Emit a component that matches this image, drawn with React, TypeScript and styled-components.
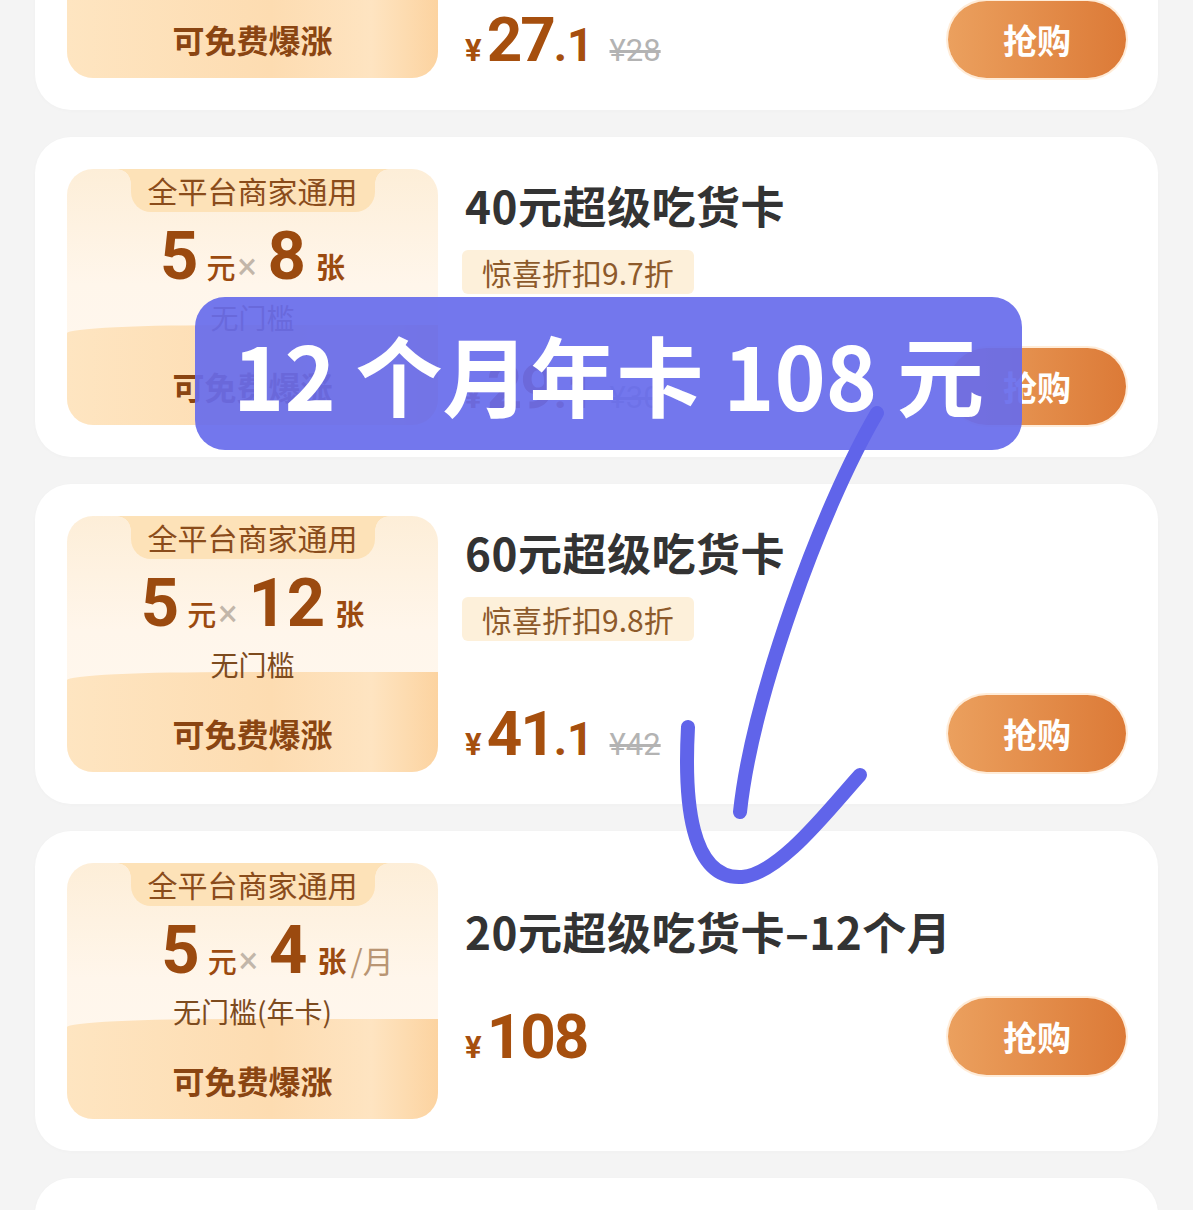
import styled, { createGlobalStyle } from "styled-components";

const GlobalStyle = createGlobalStyle`
  html, body {
    margin: 0;
    padding: 0;
    background: #f4f4f4;
  }
  body {
    font-family: "Noto Sans CJK SC", "Noto Sans", sans-serif;
  }
  * {
    box-sizing: border-box;
  }
`;

const Screen = styled.div`
  position: relative;
  width: 1193px;
  height: 1210px;
  overflow: hidden;
  background: #f4f4f4;
`;

const List = styled.div`
  display: flex;
  flex-direction: column;
  gap: 27px;
  padding: 0 35px;
  margin-top: -210px;
`;

const Card = styled.div`
  display: flex;
  gap: 27px;
  flex-shrink: 0;
  height: 320px;
  padding: 32px;
  background: #fff;
  border-radius: 36px;
  box-shadow: 0 1px 4px rgba(0, 0, 0, 0.02);
`;

const Coupon = styled.div`
  width: 371px;
  flex-shrink: 0;
  display: flex;
  flex-direction: column;
  border-radius: 26px;
  overflow: hidden;
  background: linear-gradient(180deg, #fdeed8 0%, #fff6eb 45%, #fff8f0 100%);
`;

/* sits above the foot band so the rule text can overlap its edge */
const CouponTop = styled.div`
  position: relative;
  z-index: 1;
  height: 156px;
  flex-shrink: 0;
  display: flex;
  flex-direction: column;
  align-items: center;

  > * {
    flex-shrink: 0;
  }
`;

const Scope = styled.div`
  position: relative;
  height: 43px;
  padding: 0 17px;
  background: #fde2b8;
  border-radius: 0 0 20px 20px;
  color: #8a4c1b;
  font-size: 30px;
  line-height: 43px;

  &::before,
  &::after {
    content: "";
    position: absolute;
    top: 0;
    width: 14px;
    height: 14px;
  }
  &::before {
    left: -14px;
    background: radial-gradient(circle at 0 100%, transparent 13.5px, #fde2b8 14px);
  }
  &::after {
    right: -14px;
    background: radial-gradient(circle at 100% 100%, transparent 13.5px, #fde2b8 14px);
  }
`;

const Amount = styled.div`
  display: flex;
  align-items: baseline;
  justify-content: center;
  margin-top: 11px;
  height: 66px;
  color: #9b4a0f;
`;

const Digit = styled.span`
  font-family: Roboto, "Noto Sans", sans-serif;
  font-weight: 700;
  font-size: 67px;
  line-height: 66px;
`;

const Unit = styled.span<{ $bold?: boolean }>`
  font-size: 29px;
  line-height: 29px;
  font-weight: ${(p) => (p.$bold ? 700 : 500)};
  margin: ${(p) => (p.$bold ? "0 0 0 10px" : "0 0 0 8px")};
`;

const Times = styled.span`
  font-family: Roboto, "Noto Sans", sans-serif;
  font-size: 36px;
  line-height: 36px;
  color: #c2b6a9;
  margin: 0 11px 0 2px;
`;

const PerMonth = styled.span`
  font-size: 31px;
  line-height: 31px;
  color: #b99573;
  margin-left: 4px;
  margin-right: -50px;
`;

const Rule = styled.div`
  margin-top: 11px;
  font-size: 28px;
  line-height: 34px;
  color: #7d4b1e;
`;

const CouponFoot = styled.div`
  height: 100px;
  flex-shrink: 0;
  padding-top: 22px;
  display: flex;
  align-items: center;
  justify-content: center;
  background: linear-gradient(90deg, #fee5c1 0%, #fddcb1 55%, #fee4c1 82%, #fcd3a0 100%);
  border-top-left-radius: 45% 8px;
  color: #8a4512;
  font-size: 32px;
  font-weight: 700;
`;

const Info = styled.div<{ $plain?: boolean }>`
  flex: 1;
  display: flex;
  flex-direction: column;
  align-items: flex-start;
  padding-top: ${(p) => (p.$plain ? 42 : 10)}px;
`;

const Title = styled.div`
  font-size: 44px;
  line-height: 52px;
  font-weight: 700;
  color: #333;
  letter-spacing: 0.5px;
`;

const Discount = styled.div`
  margin: 19px 0 0 -3px;
  height: 44px;
  padding: 0 20px;
  line-height: 44px;
  font-size: 30px;
  color: #8d5a2b;
  background: #fdf0da;
  border-radius: 6px;
`;

const BuyRow = styled.div<{ $plain?: boolean }>`
  margin-top: ${(p) => (p.$plain ? "41px" : "auto")};
  width: 100%;
  height: 77px;
  display: flex;
  align-items: center;
  justify-content: space-between;
`;

const Price = styled.div`
  display: flex;
  align-items: baseline;
  color: #a64f0e;
  font-family: Roboto, "Noto Sans", sans-serif;
  font-weight: 700;
  line-height: 1;
`;

const Yen = styled.span`
  font-size: 31px;
  margin-right: 5px;
`;

const Whole = styled.span`
  font-size: 62px;
  letter-spacing: -2px;
`;

const Cents = styled.span`
  font-size: 46px;
`;

const Was = styled.span`
  margin-left: 16px;
  font-size: 31px;
  font-weight: 400;
  color: #b3b3b3;
  text-decoration: line-through;
`;

const BuyButton = styled.button`
  width: 178px;
  height: 77px;
  border: none;
  border-radius: 39px;
  background: linear-gradient(90deg, #eba05e 0%, #dc7a37 100%);
  box-shadow: 0 0 0 2px rgba(255, 228, 200, 0.7);
  color: #fff;
  font-family: "Noto Sans CJK SC", sans-serif;
  font-size: 34px;
  font-weight: 700;
`;

const Callout = styled.div`
  position: absolute;
  z-index: 2;
  left: 195px;
  top: 297px;
  width: 827px;
  height: 153px;
  border-radius: 30px;
  background: rgba(103, 107, 236, 0.92);
  display: flex;
  align-items: center;
  justify-content: center;
  color: #fff;
  font-size: 87px;
  font-weight: 700;
  line-height: 1;
  white-space: pre;
`;

const Scribble = styled.svg`
  position: absolute;
  z-index: 3;
  left: 0;
  top: 0;
  width: 1193px;
  height: 1210px;
  pointer-events: none;
`;

type Deal = {
  title: string;
  count: string;
  rule: string;
  perMonth?: boolean;
  discount?: string;
  whole: string;
  cents?: string;
  was?: string;
};

const deals: Deal[] = [
  { title: "30元超级吃货卡", count: "6", rule: "无门槛", discount: "惊喜折扣9.7折", whole: "27", cents: ".1", was: "¥28" },
  { title: "40元超级吃货卡", count: "8", rule: "无门槛", discount: "惊喜折扣9.7折", whole: "29", cents: ".1", was: "¥30" },
  { title: "60元超级吃货卡", count: "12", rule: "无门槛", discount: "惊喜折扣9.8折", whole: "41", cents: ".1", was: "¥42" },
  { title: "20元超级吃货卡–12个月", count: "4", rule: "无门槛(年卡)", perMonth: true, whole: "108" },
  { title: "100元超级吃货卡", count: "20", rule: "无门槛", discount: "惊喜折扣9.8折", whole: "98", was: "¥100" },
];

export default function App() {
  return (
    <Screen>
      <GlobalStyle />
      <List>
        {deals.map((d, idx) => {
          const plain = !d.discount;
          return (
            <Card key={idx}>
              <Coupon>
                <CouponTop>
                  <Scope>全平台商家通用</Scope>
                  <Amount>
                    <Digit>5</Digit>
                    <Unit>元</Unit>
                    <Times>×</Times>
                    <Digit>{d.count}</Digit>
                    <Unit $bold>张</Unit>
                    {d.perMonth && <PerMonth>/月</PerMonth>}
                  </Amount>
                  <Rule>{d.rule}</Rule>
                </CouponTop>
                <CouponFoot>可免费爆涨</CouponFoot>
              </Coupon>
              <Info $plain={plain}>
                <Title>{d.title}</Title>
                {d.discount && <Discount>{d.discount}</Discount>}
                <BuyRow $plain={plain}>
                  <Price>
                    <Yen>¥</Yen>
                    <Whole>{d.whole}</Whole>
                    {d.cents && <Cents>{d.cents}</Cents>}
                    {d.was && <Was>{d.was}</Was>}
                  </Price>
                  <BuyButton>抢购</BuyButton>
                </BuyRow>
              </Info>
            </Card>
          );
        })}
      </List>

      <Callout>{"12 个月年卡 108 元"}</Callout>

      <Scribble viewBox="0 0 1193 1210">
        <g fill="none" stroke="#6064ea" strokeWidth={14} strokeLinecap="round" strokeLinejoin="round">
          <path d="M877 413 C 820 510, 752 700, 740 812" />
          <path d="M688 727 C 684 800, 690 880, 742 877 C 780 874, 830 808, 860 775" />
        </g>
      </Scribble>
    </Screen>
  );
}
